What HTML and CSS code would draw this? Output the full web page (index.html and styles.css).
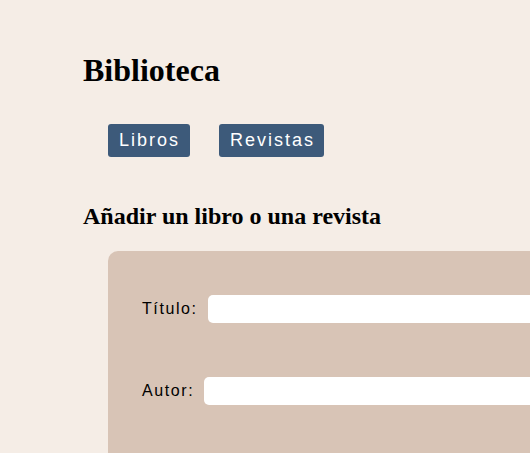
FILE: index.html
```html
<!DOCTYPE html>
<html lang="es">
<head>
<meta charset="utf-8">
<title>Biblioteca</title>
<link rel="stylesheet" href="styles.css">
</head>
<body>
<div class="page">
  <h1 class="title">Biblioteca</h1>
  <nav class="nav">
    <button class="nav-btn">Libros</button>
    <button class="nav-btn">Revistas</button>
  </nav>
  <h2 class="subtitle">Añadir un libro o una revista</h2>
  <form class="form">
    <div class="row">
      <label class="label" for="titulo">Título:</label>
      <input class="field" id="titulo" type="text">
    </div>
    <div class="row">
      <label class="label" for="autor">Autor:</label>
      <input class="field" id="autor" type="text">
    </div>
  </form>
</div>
</body>
</html>
```
FILE: styles.css
```css
html, body {
  margin: 0;
  padding: 0;
  background: #f5ede6;
  overflow: hidden;
}
.page {
  padding: 31px 0 0 83px;
  font-family: "Liberation Serif", serif;
  color: #000;
  width: 700px;
}
.title {
  font-size: 32px;
  font-weight: bold;
  margin: 21px 0;
}
.nav {
  display: flex;
  gap: 29px;
  padding-left: 25px;
  margin: 35px 0 0;
}
.nav-btn {
  font-family: "Liberation Sans", Arial, sans-serif;
  font-size: 18px;
  letter-spacing: 2px;
  color: #fff;
  background: #3d5a7a;
  border: none;
  border-radius: 3px;
  padding: 6px 9px 6px 11px;
  line-height: 21px;
  margin: 0;
}
.nav-btn:first-child {
  padding-right: 10px;
}
.subtitle {
  font-size: 24px;
  font-weight: bold;
  margin: 46px 0 21px;
}
.form {
  margin-left: 25px;
  width: 600px;
  height: 300px;
  background: #d8c4b6;
  border-radius: 10px;
  padding: 44px 0 0 34px;
  box-sizing: border-box;
  display: flex;
  flex-direction: column;
  gap: 54px;
}
.row {
  display: flex;
  align-items: center;
}
.label {
  font-family: "Liberation Sans", Arial, sans-serif;
  font-size: 16px;
  letter-spacing: 1.6px;
  margin-right: 10px;
}
.field {
  width: 400px;
  height: 28px;
  box-sizing: border-box;
  border: none;
  border-radius: 5px;
  background: #fff;
  padding: 4px 8px;
  font-size: 16px;
}
```
